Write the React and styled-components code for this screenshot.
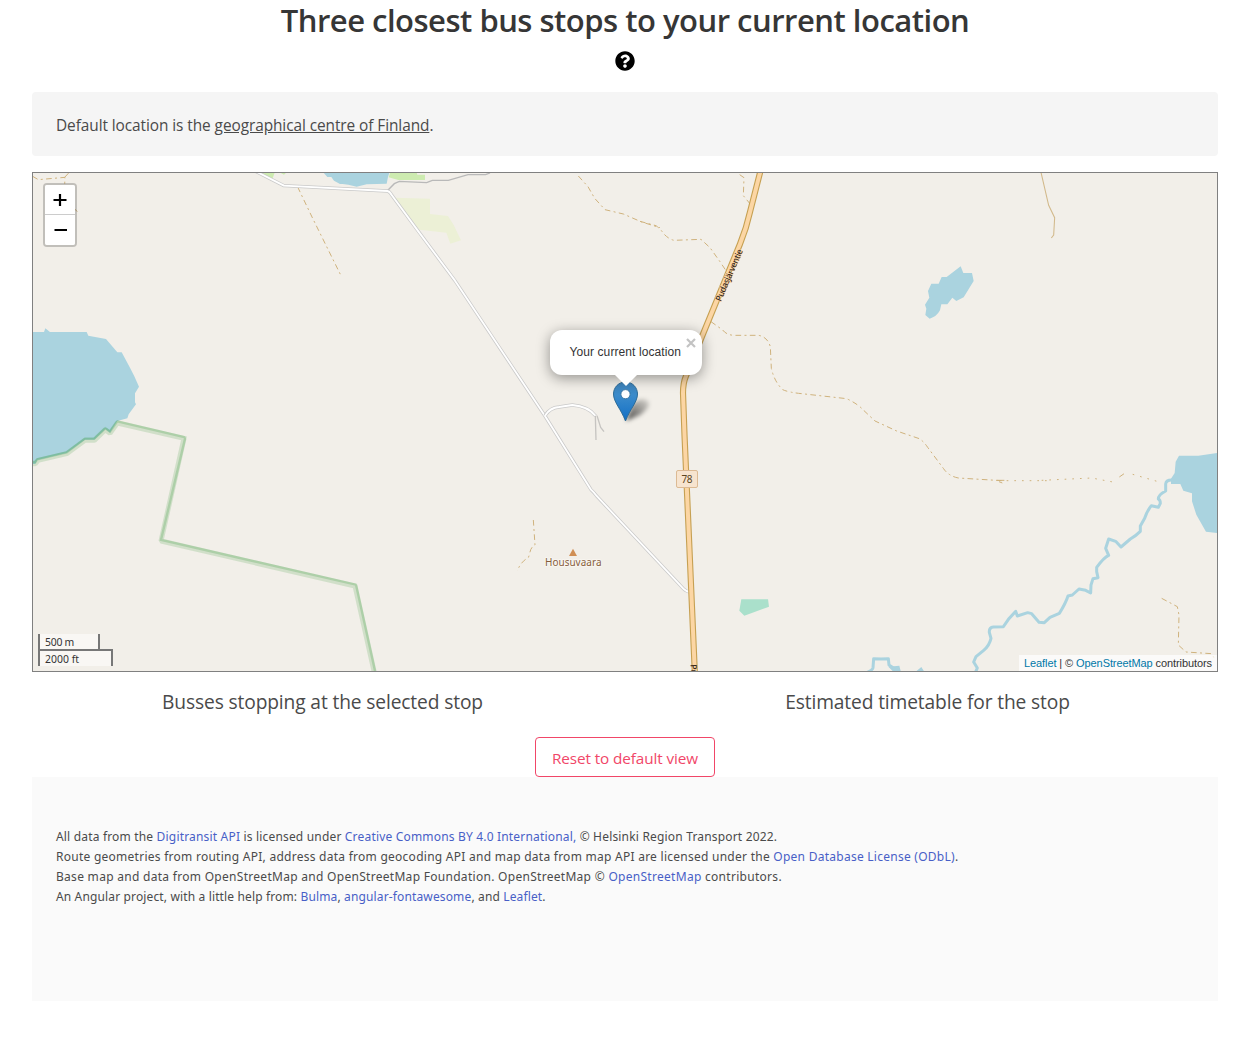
import React from "react";
import styled, { createGlobalStyle } from "styled-components";
import { FaQuestionCircle } from "react-icons/fa";

const GlobalStyle = createGlobalStyle`
  *, *::before, *::after { box-sizing: border-box; }
  body { margin: 0; background: #fff; color: #4a4a4a; font-family: "Open Sans", "Noto Sans", sans-serif; }
  h1, h2, p { margin: 0; font-weight: 400; }
`;

const Page = styled.main`
  padding: 0 32px;
  display: flex;
  flex-direction: column;
`;
const Title = styled.h1`
  && { font-weight: 600; }
  height: 51px;
  font-size: 31px;
  line-height: 41px;
  color: #363636;
  text-align: center;
  letter-spacing: -0.5px;
  white-space: nowrap;
`;
const Help = styled.div`
  height: 41px;
  display: flex;
  justify-content: center;
  color: #000;
`;
const Notice = styled.div`
  height: 64px;
  padding: 21px 24px 17px;
  border-radius: 4px;
  background: #f5f5f5;
  font-size: 15.4px;
  line-height: 26px;
  letter-spacing: -0.07px;
  a { color: inherit; text-decoration: underline; text-underline-offset: 1px; }
`;
const MapFrame = styled.section`
  position: relative;
  height: 500px;
  margin-top: 16px;
  border: 1px solid #808080;
  background: #f2efe9;
  overflow: hidden;
  font-family: "Liberation Sans", Arial, sans-serif;
`;
const MapArt = styled.svg`
  display: block;
  width: 1184px;
  height: 498px;
`;
const ZoomControl = styled.div`
  position: absolute;
  left: 10px;
  top: 10px;
  border: 2px solid rgba(0, 0, 0, 0.2);
  border-radius: 4px;
  background-clip: padding-box;
`;
const ZoomButton = styled.button`
  display: flex;
  align-items: center;
  justify-content: center;
  width: 30px;
  height: 30px;
  padding: 0;
  border: 0;
  border-bottom: ${(p) => (p.$first ? "1px solid #ccc" : "0")};
  border-radius: ${(p) => (p.$first ? "2px 2px 0 0" : "0 0 2px 2px")};
  background: #fff;
`;
const Popup = styled.div`
  position: absolute;
  left: 517px;
  top: 157px;
  width: 152px;
  height: 45px;
  padding: 14px 19.5px;
  border-radius: 12px;
  background: #fff;
  box-shadow: 0 3px 14px rgba(0, 0, 0, 0.4);
  color: #333;
  font-size: 12px;
  line-height: 17px;
  letter-spacing: 0.09px;
  white-space: nowrap;
`;
const PopupTip = styled.div`
  position: absolute;
  left: 582px;
  top: 202px;
  width: 22px;
  height: 11px;
  background: #fff;
  clip-path: polygon(0 0, 100% 0, 50% 100%);
`;
const CloseIcon = styled.svg`
  position: absolute;
  right: 6px;
  top: 8px;
  width: 10px;
  height: 10px;
`;
const Scale = styled.div`
  position: absolute;
  left: 5px;
  bottom: 5px;
  display: flex;
  flex-direction: column;
  align-items: flex-start;
`;
const ScaleLine = styled.div`
  width: ${(p) => p.$width}px;
  height: ${(p) => (p.$last ? 17 : 15)}px;
  padding: 1px 5px 0;
  border: 2px solid #777;
  border-top-width: ${(p) => (p.$last ? 2 : 0)}px;
  border-bottom-width: 0;
  background: rgba(255, 255, 255, 0.5);
  color: #333;
  font: 10.4px/14px "Noto Sans", sans-serif;
  letter-spacing: ${(p) => (p.$last ? 0.05 : -0.25)}px;
  white-space: nowrap;
`;
const Attribution = styled.div`
  position: absolute;
  right: 0;
  bottom: 0;
  width: 198px;
  height: 16px;
  padding: 0 5px;
  background: rgba(255, 255, 255, 0.7);
  color: #333;
  font-size: 11px;
  line-height: 16px;
  letter-spacing: -0.09px;
  white-space: nowrap;
  a { color: #0078a8; text-decoration: none; }
`;
const Columns = styled.div`
  display: grid;
  grid-template-columns: 1fr 1fr;
  margin: 12px -12px 0;
`;
const ColumnTitle = styled.h2`
  height: 53px;
  font-size: 19.2px;
  line-height: 36px;
  letter-spacing: -0.13px;
  text-align: center;
`;
const ResetButton = styled.button`
  align-self: center;
  width: 180px;
  height: 40px;
  padding: 2px 0 0;
  border: 1px solid #f14668;
  border-radius: 4px;
  background: #fff;
  color: #f14668;
  font-family: inherit;
  font-size: 15.3px;
  letter-spacing: -0.1px;
`;
const Footer = styled.footer`
  height: 224px;
  padding: 50px 24px 0;
  background: #fafafa;
`;
const Line = styled.p`
  font-family: "Noto Sans", sans-serif;
  font-size: 12px;
  line-height: 20px;
  letter-spacing: ${(p) => p.$track || 0}px;
  white-space: nowrap;
  a { color: #485fc7; text-decoration: none; }
`;

/* Map features are digitised in patches at three units per pixel. */
const Patch = ({ x, y, children }) => (
  <g transform={`translate(${x} ${y}) scale(0.33333)`} fill="none">{children}</g>
);
const Road = ({ d }) => (
  <>
    <path d={d} stroke="#c9c9c9" strokeWidth="10" strokeLinejoin="round" />
    <path d={d} stroke="#fff" strokeWidth="5.5" strokeLinejoin="round" />
  </>
);
const Track = ({ d, dots }) => (
  <path d={d} stroke="#cfb27c" strokeWidth="3" strokeDasharray={dots ? "5 18" : "17 10 6 10"} />
);
const HIGHWAY = "M760.2 172 L750 212 Q746.5 228 740 244 L703 334 L686 376 Q683 383 683 393 L684.5 435 L694.8 672";
const WATER = "#aad3df";

function MapDrawing() {
  return (
    <MapArt viewBox="33 173 1184 498" aria-hidden="true">
      <defs>
        <linearGradient id="pin" x1="0" y1="0" x2="0" y2="1">
          <stop offset="0" stopColor="#3f83b8" />
          <stop offset="0.35" stopColor="#3b8bcb" />
          <stop offset="1" stopColor="#126fc6" />
        </linearGradient>
        <linearGradient id="shade" x1="0" y1="1" x2="1" y2="0">
          <stop offset="0" stopColor="#000" stopOpacity="0.7" />
          <stop offset="1" stopColor="#000" stopOpacity="0.1" />
        </linearGradient>
        <filter id="soft" x="-50%" y="-50%" width="200%" height="200%">
          <feGaussianBlur stdDeviation="2.2" />
        </filter>
      </defs>

      <Patch x={30} y={165}>
        <path fill={WATER} d="M6 501H42L46 490 60 501H170L175 512 228 522 262 562H275L300 608 313 634 327 665 315 685V712L318 718 296 748 292 760 262 768 240 803 226 792 193 824H165L110 864 22 885 16 897H6Z" />
        <path fill={WATER} d="M878 20L892 36H904L912 47 930 57H990V20Z" />
        <path fill="#cdebb0" d="M690 20H735L728 40 712 37Z M745 20L762 29 772 20Z" />
        <Track d="M8 34L25 44 105 37 104 60 M104 37L116 24 M130 128L142 140" />
        <Track d="M803 66L848 160 935 336" />
        <path d="M6 896H16L24 886 110 866 165 826H193L226 794 240 805 262 774 462 820 393 1128 975 1263 1038 1545" stroke="#2d9632" strokeOpacity="0.17" strokeWidth="15" strokeLinejoin="bevel" />
        <path d="M6 891H16L22 883 110 862 165 821H193L226 790 240 800 262 769 466 817 393 1125 978 1259 1041 1545" stroke="#2d9632" strokeOpacity="0.22" strokeWidth="7" />
      </Patch>

      <Patch x={340} y={165}>
        <path fill={WATER} d="M8 20H149L144 36 140 56 80 58 50 65 25 59 8 57Z" />
        <path fill="#cdebb0" d="M151 22H230L232 29H255V45H175L146 37Z" />
        <path fill="#ecf0d6" d="M162 98L270 101V147L324 153 341 180 363 226 331 236 319 203 238 194Z" />
        <path d="M142 77L163 56 178 49 260 53 277 46H325L384 29H437L450 24" stroke="#b9b9b9" strokeWidth="4" />
        <Road d="M-255 18L-168 62 142 78Q149 79 155 90L235 199 345 347 430 475 615 753 753 974Q762 982 770 993L1030 1271Q1040 1281 1051 1281" />
        <Road d="M615 752Q630 728 657 726L697 720Q745 724 767 753" />
        <path d="M766 752L768 825M771 752L782 787 792 800" stroke="#c6c4c1" strokeWidth="4" />
        <Track d="M715 33L744 65 764 100 795 134 850 147 905 171 960 188" />
      </Patch>

      <Patch x={640} y={165}>
        <Track d="M0 169L48 182Q62 192 70 205 85 222 102 226L183 223 210 248 240 290 260 320" />
        <Track d="M299 29L312 38 310 92 329 115" />
        <Track d="M213 470L248 495Q260 511 285 511H355Q382 515 391 545L394 610Q403 650 428 674 445 682 485 686L620 701Q654 717 672 737L705 768 770 798 838 821Q852 830 863 847L910 910Q925 933 955 939L1085 947" />
        <Track dots d="M1100 947L1230 947" />
        <path d="M1070 946H1093M1077 950l10 4" stroke="#cfb27c" strokeWidth="3" />
        <path d="M1203 22L1226 121 1244 158 1241 210 1234 219" stroke="#d2b98b" strokeWidth="3.2" />
        <path fill={WATER} d="M962 304L970 324H996L1001 348 971 397 949 408 937 398 922 418H904L900 436Q890 455 869 461L856 450 859 431 855 419 868 398 864 378 874 356H896L905 336H920Z" />
      </Patch>

      <Patch x={480} y={450}>
        <Track d="M160 210L165 285Q151 292 149 312L145 323Q122 335 112 363" />
        <path fill="#aae0cb" d="M784 448H864L867 470 793 497 778 482Z" />
        <path fill="#d08f55" d="M279 296L291 318H267Z" />
      </Patch>

      <Patch x={840} y={440}>
        <path fill={WATER} d="M1017 47H1075L1140 38V280L1098 275 1069 224 1056 184V160L1030 152 1021 132H993V116L1004 99 1007 65Z" />
        <path fill={WATER} d="M145 680L178 677 183 697H162Z M225 697L244 681 254 697Z" />
        <path d="M995 120Q978 120 977 132V153Q955 164 955 177 961 179 961 190L955 202 934 197Q922 211 914 235L901 258V274Q888 287 871 297L843 321 827 304 806 297 797 325 806 346Q792 352 770 382V395L774 413 759 416 753 435 752 459 737 451 717 447 697 465 684 468Q677 490 658 520L630 532 613 548 597 547 575 521 563 518 532 528 527 514Q506 534 490 560L460 561Q447 562 448 577L453 595Q448 617 431 631L408 650 401 666 412 684 405 700" stroke={WATER} strokeWidth="9" strokeLinejoin="round" />
        <path d="M82 697Q98 690 99 683L101 656 123 657 145 656 147 675 165 687" stroke={WATER} strokeWidth="9" strokeLinejoin="round" />
        <Track dots d="M605 121L755 114 824 127" />
        <Track d="M838 111L858 97" />
        <Track dots d="M878 103L958 126" />
        <Track d="M965 475L1012 500 1017 525 1015 615 1038 636 1115 641 1125 659" />
      </Patch>

      <path d={HIGHWAY} fill="none" stroke="#c6a052" strokeWidth="6.2" />
      <path d={HIGHWAY} fill="none" stroke="#fcd6a4" strokeWidth="4" />

      <g fontFamily="Noto Sans, sans-serif" strokeLinejoin="round">
        <text transform="translate(720.7 302) rotate(-66.5)" fontSize="8.6" fill="#33271a" stroke="#fcd6a4" strokeWidth="1.2" paintOrder="stroke" textLength="56" fontWeight="500">Pudasjärventie</text>
        <text transform="translate(690.5 664.5) rotate(88)" fontSize="8.6" fill="#33271a" fontWeight="500">Pu</text>
        <rect x="676.5" y="470.5" width="21" height="17" rx="1.5" fill="#f7e4cf" stroke="#dcba94" />
        <text x="687" y="483" fontSize="10" fill="#5b4521" textAnchor="middle" textLength="11">78</text>
        <text x="545" y="566" fontSize="10" fill="#875d3b" stroke="#f8f5f0" strokeWidth="2" paintOrder="stroke" textLength="56.5">Housuvaara</text>
      </g>

      <path d="M626 421L632 405Q641 396 648 401 652 406 640 415Z" fill="url(#shade)" filter="url(#soft)" />
      <path d="M625.5 382C618.5 382 613.5 387.5 613.5 394 613.5 402 621 409 625.5 421 630 409 637.5 402 637.5 394 637.5 387.5 632.5 382 625.5 382Z" fill="url(#pin)" stroke="#2e6c97" strokeWidth="1" />
      <circle cx="625.5" cy="394.2" r="4.6" fill="#fff" stroke="#326f9c" strokeWidth="0.9" />
    </MapArt>
  );
}

export default function App() {
  return (
    <>
      <GlobalStyle />
      <Page>
        <Title>Three closest bus stops to your current location</Title>
        <Help><FaQuestionCircle size={20} /></Help>
        <Notice>Default location is the <a>geographical centre of Finland</a>.</Notice>
        <MapFrame>
          <MapDrawing />
          <ZoomControl>
            <ZoomButton $first aria-label="Zoom in">
              <svg width="14" height="14"><path d="M7 1V13M.5 7H13.5" stroke="#000" strokeWidth="2.2" /></svg>
            </ZoomButton>
            <ZoomButton aria-label="Zoom out">
              <svg width="14" height="14"><path d="M1.5 7H14" stroke="#000" strokeWidth="2" /></svg>
            </ZoomButton>
          </ZoomControl>
          <Popup>
            Your current location
            <CloseIcon viewBox="0 0 10 10"><path d="M1 1L9 9M9 1L1 9" stroke="#c3c3c3" strokeWidth="2.2" /></CloseIcon>
          </Popup>
          <PopupTip />
          <Scale>
            <ScaleLine $width={62}>500 m</ScaleLine>
            <ScaleLine $width={75} $last>2000 ft</ScaleLine>
          </Scale>
          <Attribution><a>Leaflet</a> | © <a>OpenStreetMap</a> contributors</Attribution>
        </MapFrame>
        <Columns>
          <ColumnTitle>Busses stopping at the selected stop</ColumnTitle>
          <ColumnTitle>Estimated timetable for the stop</ColumnTitle>
        </Columns>
        <ResetButton>Reset to default view</ResetButton>
        <Footer>
          <Line $track={0.18}>All data from the <a>Digitransit API</a> is licensed under <a>Creative Commons BY 4.0 International,</a> © Helsinki Region Transport 2022.</Line>
          <Line $track={0.26}>Route geometries from routing API, address data from geocoding API and map data from map API are licensed under the <a>Open Database License (ODbL)</a>.</Line>
          <Line $track={0.29}>Base map and data from OpenStreetMap and OpenStreetMap Foundation. OpenStreetMap © <a>OpenStreetMap</a> contributors.</Line>
          <Line $track={0.14}>An Angular project, with a little help from: <a>Bulma</a>, <a>angular-fontawesome</a>, and <a>Leaflet</a>.</Line>
        </Footer>
      </Page>
    </>
  );
}
